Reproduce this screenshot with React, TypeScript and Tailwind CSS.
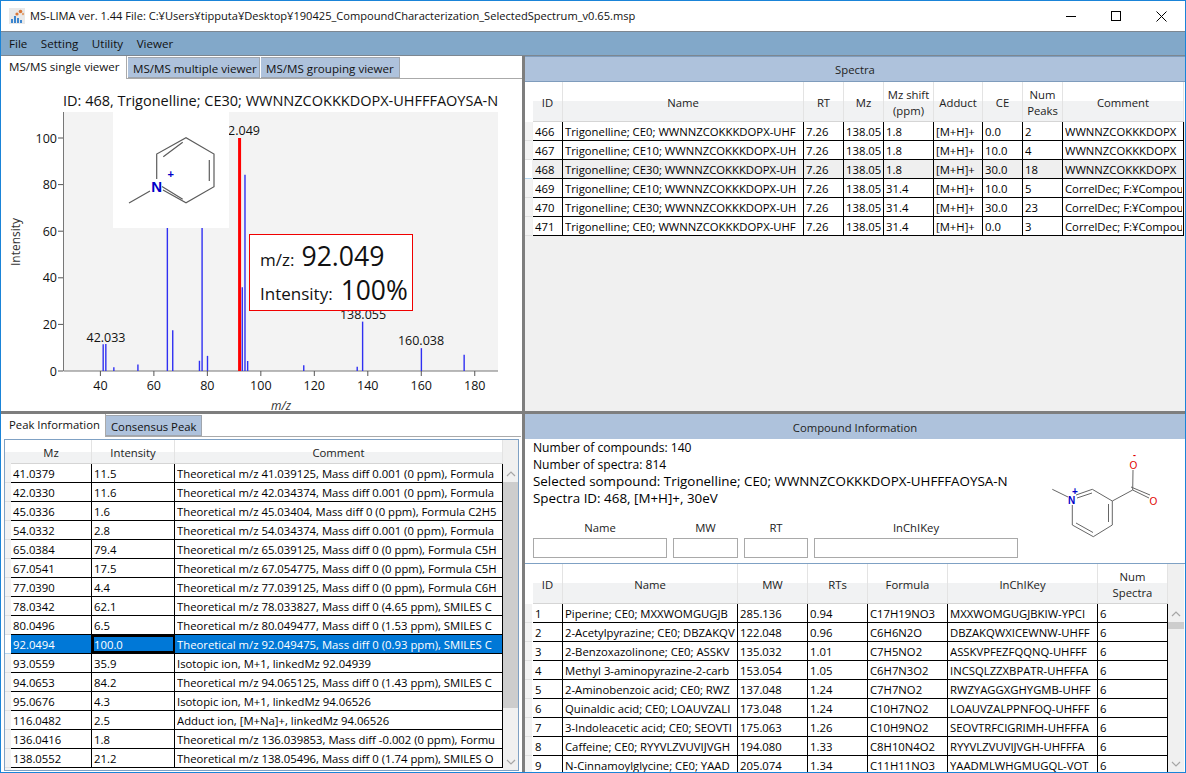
import type { ReactNode } from 'react';

const font = { fontFamily: '"Open Sans", "Noto Sans CJK JP", sans-serif' };

type Column = { label: ReactNode; width: string };

const spectraColumns: Column[] = [
  { label: 'ID', width: 'w-[30px]' },
  { label: 'Name', width: 'w-[241px]' },
  { label: 'RT', width: 'w-[40px]' },
  { label: 'Mz', width: 'w-[40px]' },
  { label: <>Mz shift<br />(ppm)</>, width: 'w-[50px]' },
  { label: 'Adduct', width: 'w-[49px]' },
  { label: 'CE', width: 'w-[40px]' },
  { label: <>Num<br />Peaks</>, width: 'w-[40px]' },
  { label: 'Comment', width: 'w-[121px]' },
];

const spectraRows = [
  ['466', 'Trigonelline; CE0; WWNNZCOKKKDOPX-UHF', '7.26', '138.05', '1.8', '[M+H]+', '0.0', '2', 'WWNNZCOKKKDOPX'],
  ['467', 'Trigonelline; CE10; WWNNZCOKKKDOPX-UH', '7.26', '138.05', '1.8', '[M+H]+', '10.0', '4', 'WWNNZCOKKKDOPX'],
  ['468', 'Trigonelline; CE30; WWNNZCOKKKDOPX-UH', '7.26', '138.05', '1.8', '[M+H]+', '30.0', '18', 'WWNNZCOKKKDOPX'],
  ['469', 'Trigonelline; CE10; WWNNZCOKKKDOPX-UH', '7.26', '138.05', '31.4', '[M+H]+', '10.0', '5', 'CorrelDec; F:¥Compou'],
  ['470', 'Trigonelline; CE30; WWNNZCOKKKDOPX-UH', '7.26', '138.05', '31.4', '[M+H]+', '30.0', '23', 'CorrelDec; F:¥Compou'],
  ['471', 'Trigonelline; CE0; WWNNZCOKKKDOPX-UHF', '7.26', '138.05', '31.4', '[M+H]+', '0.0', '3', 'CorrelDec; F:¥Compou'],
];

const peakColumns: Column[] = [
  { label: 'Mz', width: 'w-[81px]' },
  { label: 'Intensity', width: 'w-[83px]' },
  { label: 'Comment', width: 'w-[328px]' },
];

const peakRows = [
  ['41.0379', '11.5', 'Theoretical m/z 41.039125, Mass diff 0.001 (0 ppm), Formula'],
  ['42.0330', '11.6', 'Theoretical m/z 42.034374, Mass diff 0.001 (0 ppm), Formula'],
  ['45.0336', '1.6', 'Theoretical m/z 45.03404, Mass diff 0 (0 ppm), Formula C2H5'],
  ['54.0332', '2.8', 'Theoretical m/z 54.034374, Mass diff 0.001 (0 ppm), Formula'],
  ['65.0384', '79.4', 'Theoretical m/z 65.039125, Mass diff 0 (0 ppm), Formula C5H'],
  ['67.0541', '17.5', 'Theoretical m/z 67.054775, Mass diff 0 (0 ppm), Formula C5H'],
  ['77.0390', '4.4', 'Theoretical m/z 77.039125, Mass diff 0 (0 ppm), Formula C6H'],
  ['78.0342', '62.1', 'Theoretical m/z 78.033827, Mass diff 0 (4.65 ppm), SMILES C'],
  ['80.0496', '6.5', 'Theoretical m/z 80.049477, Mass diff 0 (1.53 ppm), SMILES C'],
  ['92.0494', '100.0', 'Theoretical m/z 92.049475, Mass diff 0 (0.93 ppm), SMILES C'],
  ['93.0559', '35.9', 'Isotopic ion, M+1, linkedMz 92.04939'],
  ['94.0653', '84.2', 'Theoretical m/z 94.065125, Mass diff 0 (1.43 ppm), SMILES C'],
  ['95.0676', '4.3', 'Isotopic ion, M+1, linkedMz 94.06526'],
  ['116.0482', '2.5', 'Adduct ion, [M+Na]+, linkedMz 94.06526'],
  ['136.0416', '1.8', 'Theoretical m/z 136.039853, Mass diff -0.002 (0 ppm), Formu'],
  ['138.0552', '21.2', 'Theoretical m/z 138.05496, Mass diff 0 (1.74 ppm), SMILES O'],
];

const compoundColumns: Column[] = [
  { label: 'ID', width: 'w-[30px]' },
  { label: 'Name', width: 'w-[175px]' },
  { label: 'MW', width: 'w-[70px]' },
  { label: 'RTs', width: 'w-[60px]' },
  { label: 'Formula', width: 'w-[80px]' },
  { label: 'InChIKey', width: 'w-[150px]' },
  { label: <>Num<br />Spectra</>, width: 'w-[70px]' },
];

const compoundRows = [
  ['1', 'Piperine; CE0; MXXWOMGUGJB', '285.136', '0.94', 'C17H19NO3', 'MXXWOMGUGJBKIW-YPCI', '6'],
  ['2', '2-Acetylpyrazine; CE0; DBZAKQV', '122.048', '0.96', 'C6H6N2O', 'DBZAKQWXICEWNW-UHFF', '6'],
  ['3', '2-Benzoxazolinone; CE0; ASSKV', '135.032', '1.01', 'C7H5NO2', 'ASSKVPFEZFQQNQ-UHFFF', '6'],
  ['4', 'Methyl 3-aminopyrazine-2-carb', '153.054', '1.05', 'C6H7N3O2', 'INCSQLZZXBPATR-UHFFFA', '6'],
  ['5', '2-Aminobenzoic acid; CE0; RWZ', '137.048', '1.24', 'C7H7NO2', 'RWZYAGGXGHYGMB-UHFF', '6'],
  ['6', 'Quinaldic acid; CE0; LOAUVZALI', '173.048', '1.24', 'C10H7NO2', 'LOAUVZALPPNFOQ-UHFFF', '6'],
  ['7', '3-Indoleacetic acid; CE0; SEOVTI', '175.063', '1.26', 'C10H9NO2', 'SEOVTRFCIGRIMH-UHFFFA', '6'],
  ['8', 'Caffeine; CE0; RYYVLZVUVIJVGH', '194.080', '1.33', 'C8H10N4O2', 'RYYVLZVUVIJVGH-UHFFFA', '6'],
  ['9', 'N-Cinnamoylglycine; CE0; YAAD', '205.074', '1.34', 'C11H11NO3', 'YAADMLWHGMUGQL-VOT', '6'],
];

const peaks: [number, number][] = [
  [41.04, 11.5], [42.03, 11.6], [45.03, 1.6], [54.03, 2.8], [65.04, 79.4], [67.05, 17.5],
  [77.04, 4.4], [78.03, 62.1], [80.05, 6.5], [93.06, 35.9], [94.07, 84.2], [95.07, 4.3],
  [116.05, 2.5], [136.04, 1.8], [138.06, 21.2], [160.04, 9.8], [176.03, 7],
];

const toX = (mz: number) => 100.4 + (mz - 40) * 2.674;
const toY = (v: number) => 371 - v * 2.33;

function HeaderRow({ columns, height }: { columns: Column[]; height: string }) {
  return (
    <div className={`flex ${height} shrink-0 bg-[linear-gradient(#ffffff_50%,#f1f2f3_50%)] border-b border-[#d5d5d5]`}>
      {columns.map((col, i) => (
        <div
          key={i}
          className={`${col.width} shrink-0 flex items-center justify-center pt-[2px] text-center leading-[16px] whitespace-nowrap overflow-hidden border-r border-[#e3e3e3] text-[#222]`}
        >
          <span>{col.label}</span>
        </div>
      ))}
    </div>
  );
}

function DataRow({ cells, columns, selected, gray }: { cells: string[]; columns: Column[]; selected?: boolean; gray?: boolean }) {
  const rowColor = selected ? 'bg-[#0078d7] text-white' : gray ? 'bg-[#efefef]' : 'bg-white';
  return (
    <div className={`flex h-[19px] shrink-0 border-b border-black ${rowColor}`}>
      {cells.map((cell, i) => (
        <div
          key={i}
          className={`${columns[i].width} shrink-0 border-r border-black pl-[2px] pr-px pt-[1px] leading-[18px] ${
            selected && i === 1 ? 'outline-2 -outline-offset-2 outline-black' : ''
          }`}
        >
          <div className="overflow-hidden whitespace-nowrap h-[17px]">{cell}</div>
        </div>
      ))}
    </div>
  );
}

function Gutter({ rows, mark }: { rows: number; mark?: number }) {
  return (
    <div className="w-[7px] shrink-0 flex flex-col bg-[#f3f3f3]">
      {Array.from({ length: rows }, (_, i) => (
        <div key={i} className={`h-[19px] shrink-0 border-b ${i === mark ? 'border-[#b5d6f0] bg-white' : 'border-[#e0e0e0]'}`} />
      ))}
    </div>
  );
}

function Scrollbar({ thumbTop, thumbHeight }: { thumbTop: string; thumbHeight: string }) {
  return (
    <div className="flex-1 flex flex-col items-center bg-[#f0f0f0] relative">
      <svg className="mt-[7px]" width="10" height="6" viewBox="0 0 10 6">
        <path d="M1 5l4-4 4 4" fill="none" stroke="#a6a6a6" strokeWidth="1.2" />
      </svg>
      <div className={`absolute left-0 right-0 bg-[#cdcdcd] ${thumbTop} ${thumbHeight}`} />
      <svg className="mt-auto mb-[5px]" width="10" height="6" viewBox="0 0 10 6">
        <path d="M1 1l4 4 4-4" fill="none" stroke="#a6a6a6" strokeWidth="1.2" />
      </svg>
    </div>
  );
}

function Tab({ label, active, width }: { label: string; active?: boolean; width: string }) {
  return active ? (
    <div className={`${width} h-[23px] pl-[8px] leading-[22px] bg-white border-r border-[#aaa] text-[#111] -mb-px z-10`}>{label}</div>
  ) : (
    <div className={`${width} h-[21px] pl-[5px] leading-[21px] bg-[#aec2dc] border border-[#9fa5ad] border-l-0 text-[#111]`}>{label}</div>
  );
}

function Pyridinium() {
  return (
    <svg width="116" height="116" viewBox="0 0 116 116" className="block">
      <g stroke="#5c5c5c" strokeWidth="1.2" fill="none">
        <path d="M43.7 67V42L73 25.7 101 42V74.7L73 90.7 50 78M16 91L37 79" />
        <path d="M50.3 44.7L69.7 30.3M96.3 48V69M49 74.5L69.7 87.3" />
      </g>
      <text x="43.7" y="80" textAnchor="middle" fontSize="15" fontWeight="700" fill="#0000c8" style={{ fontFamily: '"Liberation Sans", sans-serif' }}>N</text>
      <text x="57.7" y="66" textAnchor="middle" fontSize="11" fontWeight="700" fill="#0000c8" style={{ fontFamily: '"Liberation Sans", sans-serif' }}>+</text>
    </svg>
  );
}

function Trigonelline() {
  return (
    <svg width="130" height="100" viewBox="1040 450 130 100" className="block shrink-0 mt-[11px]">
      <g stroke="#666" strokeWidth="1" fill="none">
        <path d="M1052.3 489.3L1068 497M1076 495L1092.3 489.3 1112.3 501V525L1093.3 536.7 1072.3 525V505" />
        <path d="M1077 498L1092 493M1108.5 504V522M1076 523L1093 532.5" />
        <path d="M1112.3 501L1132.7 490 1133 470M1132.7 490L1149 498M1131 487L1150 495" />
      </g>
      <text x="1068" y="504" fontSize="10" fontWeight="700" fill="#0000c8" style={{ fontFamily: '"Liberation Sans", sans-serif' }}>N</text>
      <text x="1072" y="495" fontSize="10" fontWeight="700" fill="#0000c8" style={{ fontFamily: '"Liberation Sans", sans-serif' }}>+</text>
      <text x="1129.5" y="469" fontSize="10" fill="#e00000" style={{ fontFamily: '"Liberation Sans", sans-serif' }}>O</text>
      <text x="1133" y="458" fontSize="9" fontWeight="700" fill="#e00000" style={{ fontFamily: '"Liberation Sans", sans-serif' }}>-</text>
      <text x="1149.5" y="505" fontSize="10" fill="#e00000" style={{ fontFamily: '"Liberation Sans", sans-serif' }}>O</text>
    </svg>
  );
}

function AppIcon() {
  return (
    <svg width="16" height="16" viewBox="0 0 16 16" className="shrink-0">
      <rect width="16" height="16" fill="#e9e9e9" />
      <path d="M2 15v-4h2v4zM5 15V8h2v7zM8 15v-5h2v5zM11 15v-3h2v3z" fill="#3d86cf" />
      <circle cx="8" cy="6" r="1.6" fill="#d9783a" />
      <circle cx="11.5" cy="3.5" r="1.8" fill="#d9783a" />
      <circle cx="14" cy="6" r="1.2" fill="#e3a273" />
    </svg>
  );
}

function SpectrumChart() {
  const xTicks = [40, 60, 80, 100, 120, 140, 160, 180];
  const yTicks = [0, 20, 40, 60, 80, 100];
  return (
    <svg width="521" height="299" viewBox="1 112 521 299" className="block overflow-visible" style={font}>
      <rect x="63" y="112" width="435" height="259" fill="#f3f3f3" />
      <path d="M63.5 112V371H498" stroke="#777" fill="none" />
      {xTicks.map((t) => (
        <g key={t}>
          <line x1={toX(t)} x2={toX(t)} y1="371" y2="376" stroke="#555" />
          <text x={toX(t)} y="390" textAnchor="middle" fontSize="12.5" fill="#111">{t}</text>
        </g>
      ))}
      {yTicks.map((t) => (
        <g key={t}>
          <line x1="58" x2="63" y1={toY(t)} y2={toY(t)} stroke="#555" />
          <text x="57" y={toY(t) + 4.5} textAnchor="end" fontSize="12.5" fill="#111">{t}</text>
        </g>
      ))}
      {peaks.map(([mz, v]) => (
        <line key={mz} x1={toX(mz)} x2={toX(mz)} y1="371" y2={toY(v)} stroke="#2f2ff2" strokeWidth="1.4" />
      ))}
      <line x1={toX(92.05)} x2={toX(92.05)} y1="371" y2={toY(100)} stroke="#ff0000" strokeWidth="3" />
      <text x="106" y="342" textAnchor="middle" fontSize="12.5" fill="#111">42.033</text>
      <text x="260" y="135" textAnchor="end" fontSize="12.5" fill="#111">92.049</text>
      <text x="363" y="319" textAnchor="middle" fontSize="12.5" fill="#111">138.055</text>
      <text x="421" y="345" textAnchor="middle" fontSize="12.5" fill="#111">160.038</text>
      <text x="281" y="410" textAnchor="middle" fontSize="12" fontStyle="italic" fill="#333">m/z</text>
      <text transform="translate(20 242) rotate(-90)" textAnchor="middle" fontSize="12" fill="#333">Intensity</text>
    </svg>
  );
}

export default function App() {
  return (
    <div className="w-[1186px] h-[773px] flex flex-col overflow-hidden bg-white border border-[#1a84d8] text-[11.3px] text-black" style={font}>
      {/* title bar */}
      <div className="h-[30px] shrink-0 flex items-center pl-[8px] text-[11.1px] text-[#111]">
        <AppIcon />
        <span className="ml-[5px]">MS-LIMA ver. 1.44 File: C:¥Users¥tipputa¥Desktop¥190425_CompoundCharacterization_SelectedSpectrum_v0.65.msp</span>
        <div className="ml-auto flex items-center pr-[18px] gap-[35px]">
          <div className="w-[10px] h-px bg-black" />
          <div className="w-[10px] h-[10px] border border-black" />
          <svg width="11" height="11" viewBox="0 0 11 11">
            <path d="M0.5 0.5l10 10M10.5 0.5l-10 10" stroke="#000" />
          </svg>
        </div>
      </div>

      {/* menu */}
      <div className="h-[25px] shrink-0 flex items-center gap-[13.5px] pl-[8px] bg-[#82a8c9] border-y border-[#7d8791] text-[11.6px] text-[#111]">
        <span>File</span>
        <span>Setting</span>
        <span>Utility</span>
        <span>Viewer</span>
      </div>

      {/* panes */}
      <div className="flex-1 min-h-0 flex">
        {/* left column */}
        <div className="w-[521px] shrink-0 flex flex-col">
          <div className="h-[355px] shrink-0 flex flex-col">
            <div className="h-[23px] shrink-0 flex items-end gap-px border-b border-[#aaa] text-[11.6px]">
              <Tab label="MS/MS single viewer" active width="w-[126px]" />
              <Tab label="MS/MS multiple viewer" width="w-[132px]" />
              <Tab label="MS/MS grouping viewer" width="w-[139px]" />
            </div>
            <div className="h-[33px] shrink-0 pl-[62px] pt-[12px] text-[14.5px] leading-[20px] text-[#111] whitespace-nowrap">
              ID: 468, Trigonelline; CE30; WWNNZCOKKKDOPX-UHFFFAOYSA-N
            </div>
            <div className="relative flex-1 min-h-0">
              <SpectrumChart />
              <div className="absolute left-[112px] top-0 bg-white">
                <Pyridinium />
              </div>
              <div className="absolute left-[248px] top-[122px] w-[164px] h-[77px] bg-white border border-[#f00000] pl-[10px] pt-px whitespace-nowrap">
                <div className="h-[36px] flex items-baseline text-[17px] text-[#111]">
                  m/z:<span className="ml-[7px] text-[26.6px] leading-[40px]">92.049</span>
                </div>
                <div className="h-[34px] flex items-baseline text-[17px] text-[#111]">
                  Intensity:<span className="ml-[8px] text-[26.4px] leading-[36px]">100%</span>
                </div>
              </div>
            </div>
          </div>

          <div className="h-[3px] shrink-0 bg-[#7e7e7e]" />

          <div className="flex-1 min-h-0 flex flex-col">
            <div className="h-[23px] shrink-0 flex items-end border-b border-[#aaa] mr-px">
              <Tab label="Peak Information" active width="w-[105px]" />
              <Tab label="Consensus Peak" width="w-[96px]" />
            </div>
            <div className="flex-1 min-h-0 mx-[3px] mt-[2px] mb-[1px] flex flex-col border border-[#7fa1c4] overflow-hidden">
              <div className="flex h-[24px] shrink-0">
                <div className="w-[6px] shrink-0 bg-[linear-gradient(#ffffff_50%,#f1f2f3_50%)]" />
                <HeaderRow columns={peakColumns} height="h-[24px]" />
                <div className="flex-1 bg-[#f0f0f0]" />
              </div>
              <div className="flex flex-1 min-h-0 relative">
                <div className="flex flex-col w-[6px] shrink-0 overflow-hidden"><Gutter rows={17} mark={9} /></div>
                <div className="flex flex-col shrink-0">
                  {peakRows.map((r, i) => (
                    <DataRow key={i} cells={r} columns={peakColumns} selected={i === 9} />
                  ))}
                </div>
                <Scrollbar thumbTop="top-[18px]" thumbHeight="h-[226px]" />
              </div>
            </div>
          </div>
        </div>

        <div className="w-[3px] shrink-0 bg-[#7e7e7e]" />

        {/* right column */}
        <div className="flex-1 min-w-0 flex flex-col">
          <div className="h-[355px] shrink-0 flex flex-col bg-[#f0f0f0]">
            <div className="h-[26px] shrink-0 flex items-center justify-center pt-[2px] bg-[#aec2dc] border-y border-[#7f9cbc] text-[#222]">Spectra</div>
            <div className="flex pl-[7px] bg-white">
              <div className="w-px" />
              <HeaderRow columns={spectraColumns} height="h-[40px]" />
            </div>
            <div className="flex">
              <div className="flex flex-col overflow-hidden w-[8px] shrink-0"><Gutter rows={6} mark={2} /></div>
              <div className="flex flex-col">
                {spectraRows.map((r, i) => (
                  <DataRow key={i} cells={r} columns={spectraColumns} gray={i === 2} />
                ))}
              </div>
            </div>
          </div>

          <div className="h-[3px] shrink-0 bg-[#7e7e7e]" />

          <div className="flex-1 min-h-0 flex flex-col">
            <div className="h-[25px] shrink-0 flex items-center justify-center pt-[3px] bg-[#aec2dc] text-[#222]">Compound Information</div>
            <div className="h-[125px] shrink-0 flex pl-[8px] border-b border-[#7fa1c4]">
              <div className="w-[507px] shrink-0">
                <div className="leading-[17px] whitespace-nowrap">
                  <div className="text-[12.1px]">Number of compounds: 140</div>
                  <div className="text-[12.1px]">Number of spectra: 814</div>
                  <div className="text-[13.4px]">Selected sompound: Trigonelline; CE0; WWNNZCOKKKDOPX-UHFFFAOYSA-N</div>
                  <div className="text-[13.4px]">Spectra ID: 468, [M+H]+, 30eV</div>
                </div>
                <div className="flex gap-[6px] mt-[13px]">
                  {[
                    ['Name', 'w-[134px]'],
                    ['MW', 'w-[65px]'],
                    ['RT', 'w-[64px]'],
                    ['InChIKey', 'w-[204px]'],
                  ].map(([label, width]) => (
                    <div key={label} className={`${width} flex flex-col items-center gap-[2px]`}>
                      <span className="leading-[16px] text-[#222]">{label}</span>
                      <div className="w-full h-[20px] border border-[#a9a9a9]" />
                    </div>
                  ))}
                </div>
              </div>
              <Trigonelline />
            </div>
            <div className="flex-1 min-h-0 flex flex-col overflow-hidden pr-px">
              <div className="flex h-[40px] shrink-0 pl-[7px]">
                <div className="w-px" />
                <HeaderRow columns={compoundColumns} height="h-[40px]" />
                <div className="flex-1 bg-[#f0f0f0]" />
              </div>
              <div className="flex flex-1 min-h-0 relative overflow-hidden">
                <div className="flex flex-col overflow-hidden w-[8px] shrink-0"><Gutter rows={9} /></div>
                <div className="flex flex-col shrink-0">
                  {compoundRows.map((r, i) => (
                    <DataRow key={i} cells={r} columns={compoundColumns} />
                  ))}
                </div>
                <Scrollbar thumbTop="top-[18px]" thumbHeight="h-[7px]" />
              </div>
            </div>
          </div>
        </div>
      </div>
    </div>
  );
}
